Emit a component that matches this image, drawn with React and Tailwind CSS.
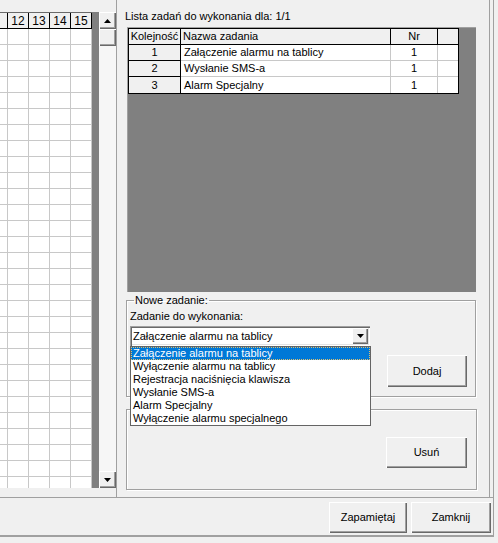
import React from "react";

const raised =
  "bg-[#f0f0f0] shadow-[inset_1px_1px_0_0_#ffffff,inset_-1px_-1px_0_0_#696969,inset_-2px_-2px_0_0_#a0a0a0]";

function Arrow({ down }) {
  return (
    <svg width="7" height="4" viewBox="0 0 7 4" className="block">
      <path d={down ? "M0 0H7L3.5 4Z" : "M3.5 0L7 4H0Z"} fill="#000" />
    </svg>
  );
}

function LeftGrid() {
  const cols = ["", "12", "13", "14", "15"];
  const widths = ["w-[8px]", "w-[21px]", "w-[21px]", "w-[21px]", "w-[21px]"];
  const rows = Array.from({ length: 29 });
  return (
    <div className="w-[92px] h-full flex flex-col bg-white overflow-hidden">
      <div className="flex h-[17px] border-t border-[#696969] shrink-0">
        {cols.map((c, i) => (
          <div
            key={i}
            className={`${widths[i]} h-full bg-[#f0f0f0] border-r border-b border-black flex items-center justify-center text-[12px] leading-none`}
          >
            {c}
          </div>
        ))}
      </div>
      {rows.map((_, r) => (
        <div key={r} className="flex h-[16px] shrink-0">
          {cols.map((c, i) => (
            <div
              key={i}
              className={`${widths[i]} h-full border-r border-b border-[#c8c8c8]`}
            />
          ))}
        </div>
      ))}
    </div>
  );
}

function Scrollbar() {
  return (
    <div className="w-[17px] h-full flex flex-col bg-[#f6f6f6]">
      <div className={`${raised} h-[17px] flex items-center justify-center`}>
        <Arrow />
      </div>
      <div className={`${raised} h-[17px]`} />
      <div className="flex-1" />
      <div className={`${raised} h-[17px] flex items-center justify-center`}>
        <Arrow down />
      </div>
    </div>
  );
}

function TaskTable() {
  const head = ["Kolejność", "Nazwa zadania", "Nr", ""];
  const w = ["w-[52px]", "w-[210px]", "w-[47px]", "w-[20px]"];
  const rows = [
    ["1", "Załączenie alarmu na tablicy", "1", ""],
    ["2", "Wysłanie SMS-a", "1", ""],
    ["3", "Alarm Specjalny", "1", ""],
  ];
  return (
    <div className="w-[331px] border border-black flex flex-col bg-white leading-none">
      <div className="flex h-[16px]">
        {head.map((h, i) => (
          <div
            key={i}
            className={`${w[i]} ${i < 3 ? "border-r" : ""} border-b border-black bg-[#f0f0f0] flex items-center ${
              i === 1 ? "justify-start pl-[2px]" : "justify-center"
            }`}
          >
            {h}
          </div>
        ))}
      </div>
      {rows.map((row, r) => (
        <div key={r} className="flex h-[16px]">
          {row.map((c, i) => (
            <div
              key={i}
              className={`${w[i]} flex items-center ${i < 3 ? "border-r" : ""} ${
                r < 2 ? "border-b" : ""
              } ${
                i === 0
                  ? "bg-[#f0f0f0] border-black justify-center"
                  : "border-[#c8c8c8] " + (i === 1 ? "justify-start pl-[3px]" : "justify-center")
              }`}
            >
              {c}
            </div>
          ))}
        </div>
      ))}
    </div>
  );
}

const groupBox =
  "border border-[#a0a0a0] shadow-[1px_1px_0_0_#ffffff,inset_1px_1px_0_0_#ffffff]";

function Button({ children, className = "" }) {
  return (
    <div className={`${raised} flex items-center justify-center text-[11px] ${className}`}>
      {children}
    </div>
  );
}

export default function App() {
  const items = [
    "Załączenie alarmu na tablicy",
    "Wyłączenie alarmu na tablicy",
    "Rejestracja naciśnięcia klawisza",
    "Wysłanie SMS-a",
    "Alarm Specjalny",
    "Wyłączenie alarmu specjalnego",
  ];
  return (
    <div className="w-[498px] h-[543px] bg-[#f0f0f0] overflow-hidden text-[11px] text-black font-['Liberation_Sans',Arial,sans-serif] leading-none">
      <div className="flex h-[497px] w-[494px] border-r border-[#a0a0a0]">
        {/* left panel */}
        <div className="w-[117px] shrink-0 pt-[12px] pb-[9px] flex border-r border-[#a0a0a0]">
          <LeftGrid />
          <div className="w-[7px] h-full bg-[#808080]" />
          <Scrollbar />
        </div>
        {/* right panel */}
        <div className="flex-1 flex flex-col pl-[8px] pr-[13px] border-r border-[#a0a0a0]">
          <div className="h-[27px] pt-[11px]">Lista zadań do wykonania dla: 1/1</div>
          <div className="ml-[2px] h-[265px] bg-[#808080] border-t border-l border-[#a0a0a0]">
            <TaskTable />
          </div>
          <fieldset className={`${groupBox} mt-[2px] h-[103px] ml-[1px] px-[3px] relative z-10`}>
            <legend className="ml-[4px] px-[1px] h-[13px] leading-[13px]">Nowe zadanie:</legend>
            <div className="mt-[3px] h-[13px] leading-[13px]">Zadanie do wykonania:</div>
            <div className="relative mt-[3px] w-[240px]">
              <div className="h-[20px] bg-white flex items-center shadow-[inset_1px_1px_0_0_#a0a0a0,inset_2px_2px_0_0_#696969,inset_-1px_-1px_0_0_#ffffff,inset_-2px_-2px_0_0_#e3e3e3] pl-[3px] pr-[2px] py-[2px]">
                <span className="flex-1">Załączenie alarmu na tablicy</span>
                <div className={`${raised} w-[16px] h-[16px] flex items-center justify-center`}>
                  <Arrow down />
                </div>
              </div>
              <div className="absolute left-0 top-[20px] w-[241px] bg-white border border-[#646464] flex flex-col z-20">
                {items.map((t, i) => (
                  <div
                    key={i}
                    className={`h-[13px] leading-[13px] pl-[2px] ${
                      i === 0
                        ? "bg-[#0078d7] text-white outline-1 outline-dotted outline-[#e0c070] -outline-offset-1"
                        : ""
                    }`}
                  >
                    {t}
                  </div>
                ))}
              </div>
            </div>
            <div className="flex justify-end pr-[5px] mt-[9px]">
              <Button className="w-[80px] h-[32px]">Dodaj</Button>
            </div>
          </fieldset>
          <fieldset className={`${groupBox} mt-[6px] h-[87px] ml-[1px] mr-[-1px] px-[3px]`}>
            <legend className="ml-[4px] px-[1px] h-[13px] leading-[13px] invisible">Usuwanie</legend>
            <div className="flex justify-end pr-[6px] mt-[21px]">
              <Button className="w-[81px] h-[31px]">Usuń</Button>
            </div>
          </fieldset>
        </div>
        <div className="w-[3px] shrink-0" />
      </div>
      <div className="w-[494px] h-[40px] border-t border-r border-b-2 border-[#a0a0a0] flex justify-end gap-[4px] pt-[4px] pr-[2px]">
        <Button className="w-[78px] h-[31px]">Zapamiętaj</Button>
        <Button className="w-[80px] h-[31px]">Zamknij</Button>
      </div>
    </div>
  );
}
